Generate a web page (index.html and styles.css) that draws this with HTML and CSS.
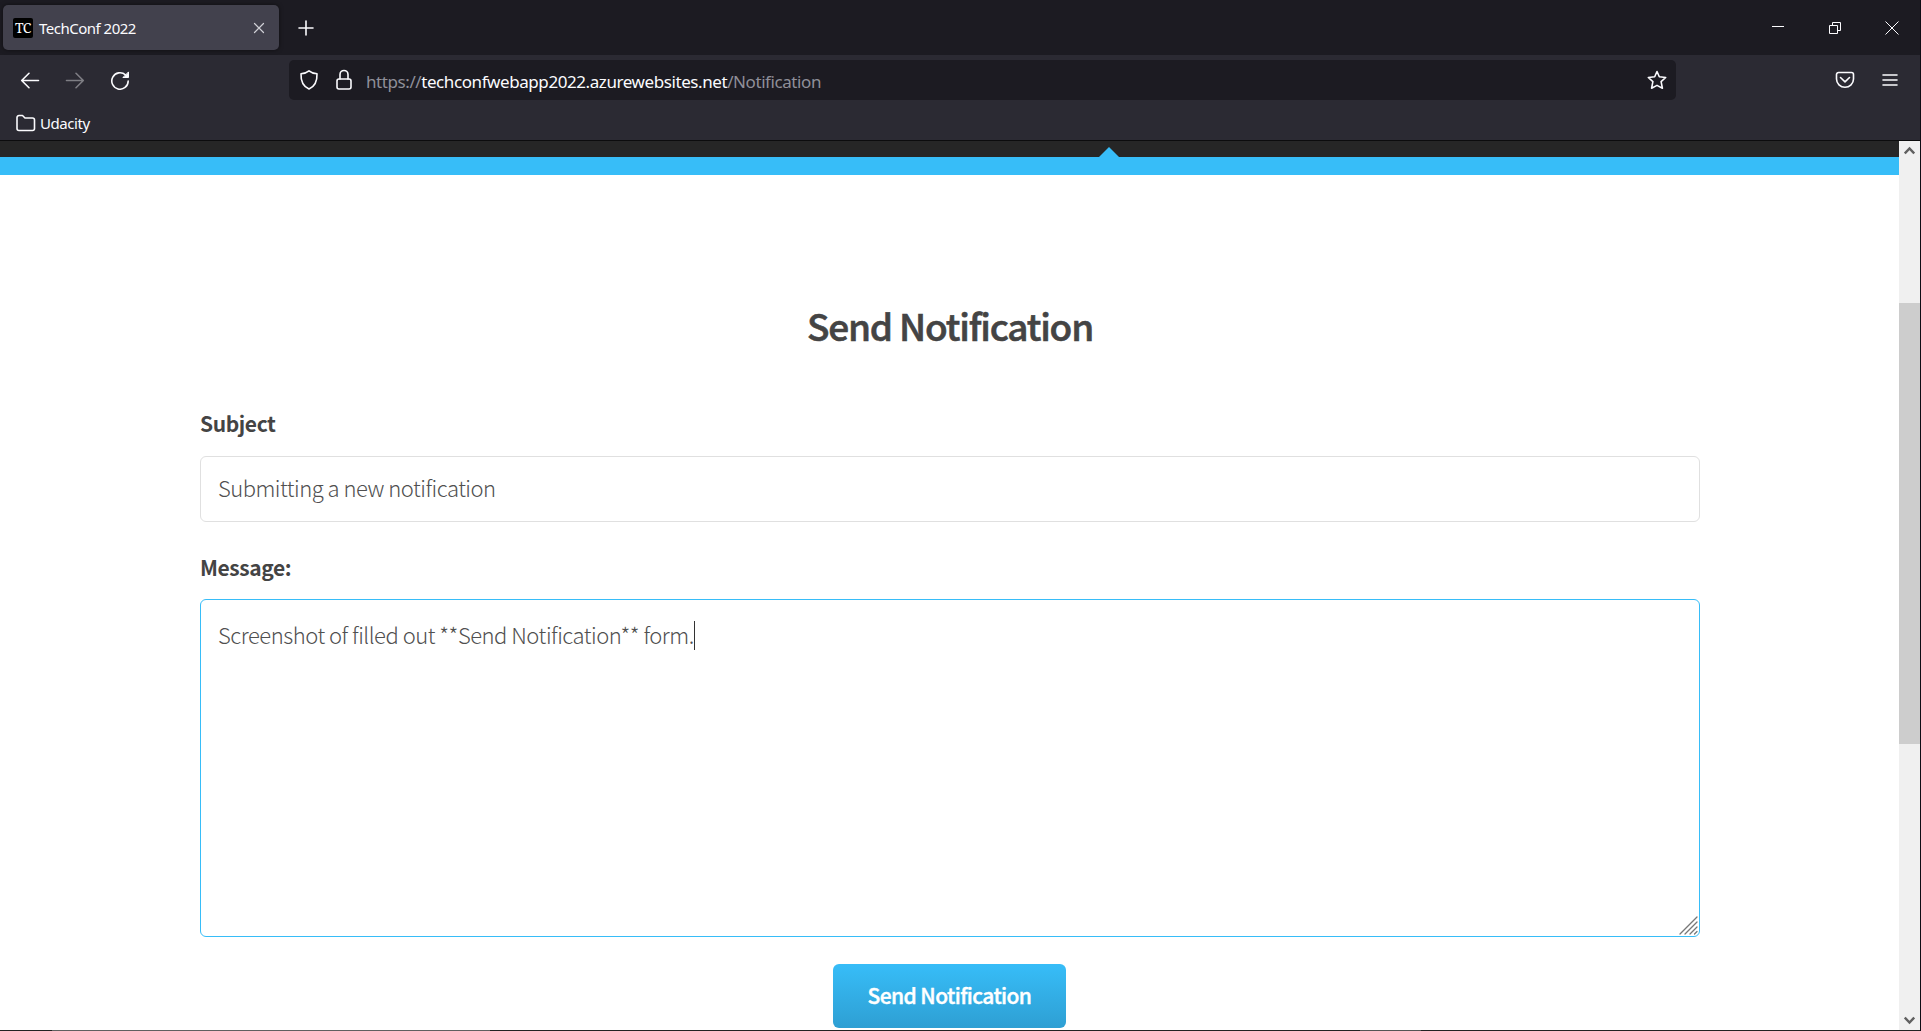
FILE: index.html
```html
<!DOCTYPE html>
<html lang="en">
<head>
<meta charset="utf-8">
<title>TechConf 2022</title>
<link rel="stylesheet" href="styles.css">
</head>
<body>
<div class="window">
  <div class="browser">
    <div class="tabbar">
      <div class="tab">
        <span class="favicon">TC</span>
        <span class="tab-title">TechConf 2022</span>
        <svg class="tab-close" width="12" height="12" viewBox="0 0 12 12"><path d="M1.500 1.500l9 9M10.500 1.500l-9 9"/></svg>
      </div>
      <svg class="new-tab" width="16" height="16" viewBox="0 0 16 16"><path d="M8 1v14M1 8h14"/></svg>
      <div class="window-controls">
        <svg width="14" height="14" viewBox="0 0 14 14"><path d="M1 5.500h12"/></svg>
        <svg width="14" height="14" viewBox="0 0 14 14"><path d="M1.500 4.500h8v8h-8zM4.500 4.500v-3h8v8h-3"/></svg>
        <svg width="14" height="14" viewBox="0 0 14 14"><path d="M.5.5l13 13M13.500.5l-13 13"/></svg>
      </div>
    </div>
    <div class="navbar">
      <div class="nav-buttons">
        <svg width="20" height="20" viewBox="0 0 20 20"><path d="M18.500 10.500H2M9 3.300L1.700 10.500 9 17.700"/></svg>
        <svg class="disabled" width="20" height="20" viewBox="0 0 20 20"><path d="M1.500 10.500H18M11 3.300l7.300 7.200-7.300 7.200"/></svg>
        <svg width="20" height="20" viewBox="0 0 20 20"><path d="M18.200 11A8.200 8.200 0 1 1 15.500 4.900"/><path class="solid" d="M18.500 2.300v5.200h-5.200z"/></svg>
      </div>
      <div class="urlbar">
        <svg width="20" height="22" viewBox="0 0 20 22"><path d="M10 1.800c2.300 2 5 2.600 8 2.900C18.300 12 15.500 17.500 10 20 4.500 17.500 1.700 12 2 4.700c3-.3 5.700-.9 8-2.900z"/></svg>
        <svg width="16" height="22" viewBox="0 0 16 22"><rect x="1" y="10" width="14" height="10" rx="2"/><path d="M4 10V5.500a4 4 0 0 1 8 0V10"/></svg>
        <span class="url">https://<b>techconfwebapp2022.azurewebsites.net</b>/Notification</span>
        <svg class="star" width="20" height="20" viewBox="0 0 20 20"><path d="M10 1.500l2.300 5.300 6.400.7-4.600 4.200 1.300 6.500L10 15.400l-5.400 2.800 1.300-6.500-4.600-4.200 6.400-.7z"/></svg>
      </div>
      <div class="nav-actions">
        <svg width="20" height="20" viewBox="0 0 20 20"><path d="M3.500 2.500h13a2 2 0 0 1 2 2V9a8.500 8.300 0 0 1-17 0V4.500a2 2 0 0 1 2-2zM5.500 7.500L10 11.800l4.500-4.300"/></svg>
        <svg width="16" height="16" viewBox="0 0 16 16"><path d="M1 3h14M1 8h14M1 13h14"/></svg>
      </div>
    </div>
    <div class="bookmarks">
      <svg width="20" height="18" viewBox="0 0 20 18"><path d="M1 14.500v-11a2 2 0 0 1 2-2h3.500l2.500 2.500h7.500a2 2 0 0 1 2 2v8.500a2 2 0 0 1-2 2H3a2 2 0 0 1-2-2z"/></svg>
      <span class="bookmark-name">Udacity</span>
    </div>
  </div>
  <div class="viewport">
    <main class="page">
      <div class="site-header"><svg class="pointer" width="20" height="10" viewBox="0 0 20 10"><path d="M0 10L10 0l10 10z"/></svg></div>
      <div class="accent"></div>
      <form class="form">
        <h2 class="title">Send Notification</h2>
        <label class="label">Subject</label>
        <div class="field">Submitting a new notification</div>
        <label class="label label-message">Message:</label>
        <div class="field area"><span>Screenshot of filled out **Send Notification** form.</span><i class="caret"></i>
          <svg class="grip" width="20" height="20" viewBox="0 0 20 20"><path d="M1 18L18 1M6 18L18 6M11 18l7-7M15.500 18l2.500-2.500"/></svg>
        </div>
        <button class="button" type="button">Send Notification</button>
      </form>
    </main>
    <div class="scrollbar">
      <svg width="11" height="9" viewBox="0 0 11 9"><path d="M.8 7.500l4.700-5 4.700 5"/></svg>
      <div class="track"><div class="thumb"></div></div>
      <svg width="11" height="9" viewBox="0 0 11 9"><path d="M.8 1.500l4.700 5 4.700-5"/></svg>
    </div>
  </div>
  <div class="bottom-edge"></div>
</div>
</body>
</html>
```
FILE: styles.css
```css
* { box-sizing: border-box; }
body { margin: 0; overflow: hidden; background: #fff; }
svg { fill: none; stroke: #fbfbfe; stroke-width: 1.6; stroke-linecap: round; stroke-linejoin: round; flex: none; display: block; }
.window { width: 1921px; height: 1031px; display: flex; flex-direction: column; border-right: 1px solid #0d0c14; }
.browser { font-family: "Noto Sans", "Open Sans", sans-serif; color: #fbfbfe; background: #2b2a33; height: 141px; border-bottom: 1px solid #0c0c0d; flex: none; }
.tabbar { height: 55px; background: #1c1b22; display: flex; align-items: center; padding-left: 3px; }
.tab { width: 276px; height: 45px; border-radius: 5px; background: #42414d; display: flex; align-items: center; padding: 0 14px 0 10px; box-shadow: 0 0 4px rgba(0,0,0,.5); }
.favicon { width: 20px; height: 20px; border-radius: 2px; background: #000; font: 14px/20px "Noto Serif", "Liberation Serif", serif; text-align: center; letter-spacing: -.5px; }
.tab-title { margin-left: 6px; padding-top: 1px; font-size: 15px; letter-spacing: -.5px; white-space: nowrap; }
.tab-close { margin-left: auto; stroke-width: 1.2; stroke: #d0d0d6; }
.new-tab { margin-left: 19px; }
.window-controls { margin-left: auto; display: flex; gap: 43px; padding-right: 21px; }
.window-controls svg { stroke-width: 1; stroke-linecap: butt; stroke-linejoin: miter; }
.navbar { height: 50px; display: flex; align-items: center; }
.nav-buttons { width: 289px; display: flex; gap: 25px; padding-left: 20px; }
.disabled { opacity: .4; }
.solid { fill: #fbfbfe; stroke-width: 1; }
.urlbar { width: 1387px; height: 40px; border-radius: 5px; background: #1c1b22; display: flex; align-items: center; padding: 0 9px 0 10px; }
.urlbar svg + svg { margin-left: 17px; }
.url { margin-left: 14px; padding-top: 3px; font-size: 17px; letter-spacing: -.42px; color: #8f8f99; white-space: nowrap; }
.url b { font-weight: 400; color: #fbfbfe; }
.urlbar .star { margin-left: auto; }
.nav-actions { margin-left: auto; display: flex; gap: 27px; align-items: center; padding-right: 22px; }
.bookmarks { height: 35px; display: flex; align-items: center; padding-left: 16px; }
.bookmark-name { margin-left: 4px; font-size: 15px; letter-spacing: -.45px; }
.viewport { flex: 1; display: flex; min-height: 0; }
.page { flex: 1; font-family: "Noto Sans CJK SC", sans-serif; color: #444; }
.site-header { height: 16px; background: #262626; display: flex; align-items: flex-end; padding-left: 1099px; }
.pointer { fill: #37bdf8; stroke: none; }
.accent { height: 18px; background: #37bdf8; }
.form { width: 1500px; margin-left: 200px; display: flex; flex-direction: column; }
.title { margin: 118px 0 0; height: 64px; font-size: 37px; line-height: 64px; font-weight: 500; text-align: center; letter-spacing: -1.2px; -webkit-text-stroke: .6px #444; }
.label { margin-top: 45px; height: 42px; line-height: 42px; margin-bottom: 12px; font-size: 21px; font-weight: 700; letter-spacing: -.4px; }
.label-message { margin-top: 24px; margin-bottom: 11px; }
.field { height: 66px; border: 1px solid #e0e0e0; border-radius: 6px; padding: 0 17px 4px; font-size: 22px; font-weight: 300; letter-spacing: -.5px; color: #505050; display: flex; align-items: center; white-space: nowrap; }
.area { height: 338px; border-color: #37bdf8; position: relative; align-items: flex-start; padding-top: 17px; line-height: 34px; letter-spacing: -.48px; }
.caret { width: 1px; height: 29px; background: #333; margin: 4px 0 0 0; }
.grip { position: absolute; right: 0; bottom: 0; stroke: #777; stroke-width: 1.3; }
.button { align-self: flex-start; margin: 27px 0 0 633px; width: 233px; height: 64px; border: 0; border-radius: 6px; background: linear-gradient(#37bdf8, #2e9fd3); color: #fff; font: 500 21px/62px "Noto Sans CJK SC", sans-serif; padding: 0 0 2px; letter-spacing: -.6px; -webkit-text-stroke: .4px #fff; }
.scrollbar { width: 21px; background: #f0f0f0; display: flex; flex-direction: column; align-items: center; padding: 5px 0 5px; }
.scrollbar svg { stroke: #606060; stroke-width: 2.4; stroke-linecap: butt; stroke-linejoin: miter; }
.track { flex: 1; width: 21px; padding-top: 148px; }
.thumb { height: 441px; background: #cdcdcd; }
.bottom-edge { height: 1px; background: linear-gradient(90deg, #222 52px, #606060 52px 490px, #222 490px 1360px, #555 1360px 1421px, #222 1421px); }
```
